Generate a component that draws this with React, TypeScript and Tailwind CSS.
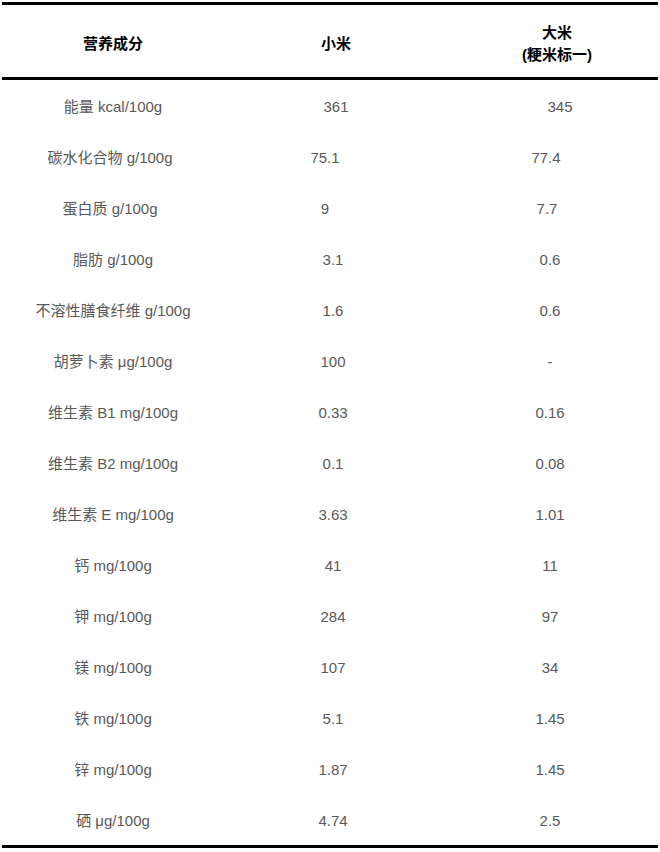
const rows = [
  { name: "能量 kcal/100g", millet: "361", rice: "345", nameCls: "", milletCls: "pl-[6px]", riceCls: "pl-[20px]" },
  { name: "碳水化合物 g/100g", millet: "75.1", rice: "77.4", nameCls: "pr-[6px]", milletCls: "pr-[16px]", riceCls: "pr-[8px]" },
  { name: "蛋白质 g/100g", millet: "9", rice: "7.7", nameCls: "pr-[6px]", milletCls: "pr-[16px]", riceCls: "pr-[6px]" },
  { name: "脂肪 g/100g", millet: "3.1", rice: "0.6" },
  { name: "不溶性膳食纤维 g/100g", millet: "1.6", rice: "0.6" },
  { name: "胡萝卜素 μg/100g", millet: "100", rice: "-" },
  { name: "维生素 B1 mg/100g", millet: "0.33", rice: "0.16" },
  { name: "维生素 B2 mg/100g", millet: "0.1", rice: "0.08" },
  { name: "维生素 E mg/100g", millet: "3.63", rice: "1.01" },
  { name: "钙 mg/100g", millet: "41", rice: "11" },
  { name: "钾 mg/100g", millet: "284", rice: "97" },
  { name: "镁 mg/100g", millet: "107", rice: "34" },
  { name: "铁 mg/100g", millet: "5.1", rice: "1.45" },
  { name: "锌 mg/100g", millet: "1.87", rice: "1.45" },
  { name: "硒 μg/100g", millet: "4.74", rice: "2.5" },
];

const gridCols = "grid grid-cols-[222px_218px_216px]";

export default function App() {
  return (
    <div
      className="min-h-[852px] bg-white pt-[2px]"
      style={{ fontFamily: '"Liberation Sans", "Noto Sans CJK SC", sans-serif' }}
    >
      <div className="mx-[2px] border-y-[3px] border-black">
        <div
          className={`${gridCols} h-[75px] items-center border-b-[3px] border-black pt-[5px] text-[15px] font-bold leading-[22px] text-black`}
        >
          <div className="text-center">营养成分</div>
          <div className="pl-[6px] text-center">小米</div>
          <div className="pl-[14px] text-center">
            大米
            <br />
            (粳米标一)
          </div>
        </div>

        {rows.map((row) => (
          <div
            key={row.name}
            className={`${gridCols} h-[51px] items-center pt-[2px] text-[15px] leading-[22px] text-[#595959]`}
          >
            <div className={`text-center ${row.nameCls ?? ""}`}>{row.name}</div>
            <div className={`text-center ${row.milletCls ?? ""}`}>{row.millet}</div>
            <div className={`text-center ${row.riceCls ?? ""}`}>{row.rice}</div>
          </div>
        ))}
      </div>
    </div>
  );
}
